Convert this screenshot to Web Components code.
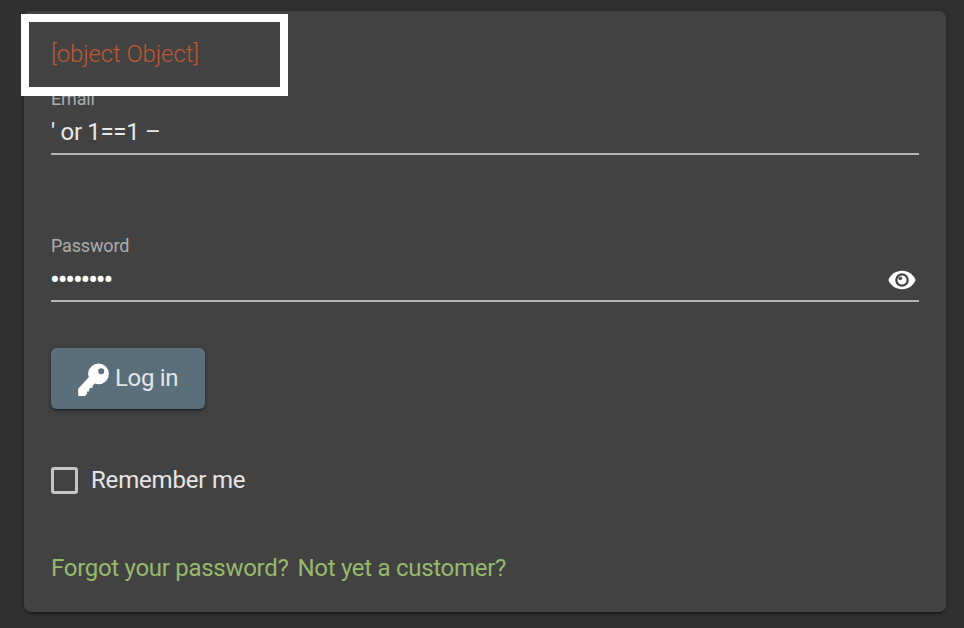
<!DOCTYPE html>
<html lang="en"><head><meta charset="utf-8"><title>Login</title>
<style>html,body{margin:0;height:100%;background:#303030}body{font-family:Roboto,"Liberation Sans",sans-serif;overflow:hidden}</style></head>
<body>
<login-card>
  <error-note slot="error">[object Object]</error-note>
  <text-field label="Email">' or 1==1 –</text-field>
  <text-field label="Password" masked>••••••••</text-field>
  <login-button>Log in</login-button>
  <check-option>Remember me</check-option>
  <link-row><span>Forgot your password?</span><span>Not yet a customer?</span></link-row>
</login-card>
<script>
const define=(name,html)=>customElements.define(name,class extends HTMLElement{
  constructor(){super();const t=document.createElement('template');t.innerHTML=html;
    this.attachShadow({mode:'open'}).append(t.content.cloneNode(true));}
  connectedCallback(){const l=this.shadowRoot.querySelector('.label');if(l)l.textContent=this.getAttribute('label');}
});
define('login-card',`<style>
:host{display:flex;flex-direction:column;align-items:flex-start;position:relative;box-sizing:border-box;margin:0 18px 0 24px;height:601px;top:11px;padding:27px;background:#424242;border-radius:7px;box-shadow:0 3px 2px -2px rgba(0,0,0,.3),0 2px 2px rgba(0,0,0,.2),0 1px 5px rgba(0,0,0,.18)}
</style><slot name="error"></slot><slot></slot>`);
define('error-note',`<style>
:host{display:block;height:32px;line-height:32px;font-size:24px;font-weight:300;color:#bf5932;letter-spacing:-.12px;white-space:nowrap}
.frame{position:absolute;left:-3px;top:3px;box-sizing:border-box;width:267px;height:82px;border:8px solid #fff;border-bottom-width:9px;z-index:2}
</style><slot></slot><div class="frame"></div>`);
define('text-field',`<style>
:host{display:flex;flex-direction:column;align-self:stretch;box-sizing:border-box;height:76px;border-bottom:2px solid #b5b5b5;margin-top:9px;color:#e8e8e8}
:host([masked]){margin-top:71px}
.label{font-size:18px;line-height:20px;margin-top:10px;color:#acacac;letter-spacing:-.17px}
.row{display:flex;align-items:center;justify-content:space-between;height:34px;margin-top:6px}
.value{font-size:24px;line-height:34px;white-space:pre;letter-spacing:-.32px}
:host([masked]) .value{font-size:29px;letter-spacing:-2.15px;color:#fff;margin:2px 0 0 -1px}
svg{display:none;width:28px;height:20px;margin:2px 3px 0 0}
:host([masked]) svg{display:block}
</style><div class="label"></div><div class="row"><div class="value"><slot></slot></div>
<svg viewBox="0 0 28 20"><path fill="#fff" d="M14 .7C7.7.7 2.5 4.600.4 10c2.100 5.400 7.300 9.300 13.600 9.300S25.500 15.400 27.600 10C25.500 4.600 20.300.7 14 .7Z"/><circle cx="14" cy="10" r="5.700" fill="#fff" stroke="#424242" stroke-width="2.300"/><circle cx="12.300" cy="8.300" r="1.900" fill="#555"/></svg></div>`);
define('login-button',`<style>
:host{display:flex;align-items:center;box-sizing:border-box;width:154px;height:61px;margin-top:46px;padding-left:27px;gap:6px;background:#5b6f7b;border-radius:6px;color:#e2e6e8;font-size:24px;line-height:30px;letter-spacing:-.35px;box-shadow:0 4px 2px -3px rgba(0,0,0,.25),0 2px 3px rgba(0,0,0,.2),0 1px 6px rgba(0,0,0,.15)}
svg{width:31px;height:33px;flex:none;margin-top:2px}
.text{white-space:nowrap;margin-top:-1px}
</style><svg viewBox="0 0 31 33"><path fill="#fff" fill-rule="evenodd" d="M20.500.5a10.300 10.300 0 0 1 0 20.800q-2 0-3.700-.7l-2.300 2.400v2.100h-2.300l-1 1.200v2.200H9v2.300l-2 2.200H.2v-7.300L10.900 14q-.8-1.700-.8-3.500A10.400 10.400 0 0 1 20.500.5ZM23.200 5.200a3 3 0 1 0 0 6 3 3 0 0 0 0-6Z"/></svg><div class="text"><slot></slot></div>`);
define('check-option',`<style>
:host{display:flex;align-items:center;height:32px;margin-top:55px;gap:13px;font-size:24px;line-height:32px;color:#e6e6e6;letter-spacing:-.18px;white-space:nowrap}
.box{box-sizing:border-box;width:27px;height:27px;border:3px solid #c6c6c6;border-radius:3px;margin-top:1px}
.text{margin-top:-1px}
</style><div class="box"></div><div class="text"><slot></slot></div>`);
define('link-row',`<style>
:host{display:flex;gap:9px;margin-top:56px;height:32px;font-size:24px;line-height:32px;color:#97b96b;letter-spacing:-.29px;white-space:nowrap}
</style><slot></slot>`);
</script>
</body></html>
